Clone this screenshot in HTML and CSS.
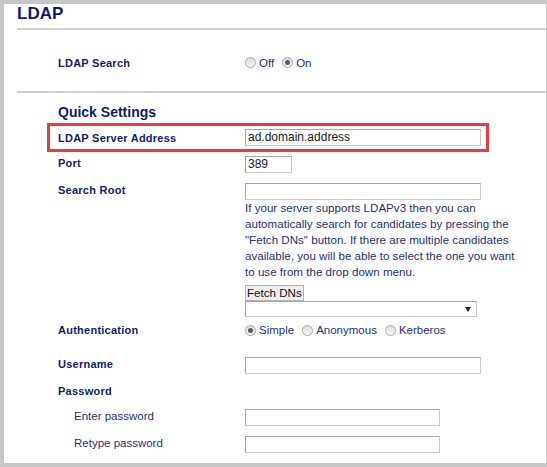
FILE: index.html
```html
<!DOCTYPE html>
<html>
<head>
<meta charset="utf-8">
<link rel="stylesheet" href="styles.css">
</head>
<body>
<div class="panel">
  <h1 class="title">LDAP</h1>
  <div class="rule"></div>
  <div class="search-row">
    <div class="label">LDAP Search</div>
    <div class="radios">
      <span class="radio"></span><span class="rtext">Off</span>
      <span class="radio checked"></span><span class="rtext">On</span>
    </div>
  </div>
  <div class="rule"></div>
  <div class="section">
    <h2 class="heading">Quick Settings</h2>
    <div class="highlight">
      <div class="label">LDAP Server Address</div>
      <div class="input wide">ad.domain.address</div>
    </div>
    <div class="row r-port">
      <div class="label">Port</div>
      <div class="input port">389</div>
    </div>
    <div class="row r-root">
      <div class="label">Search Root</div>
      <div class="control">
        <div class="input wide"></div>
        <p class="help">If your server supports LDAPv3 then you can automatically search for candidates by pressing the "Fetch DNs" button. If there are multiple candidates available, you will be able to select the one you want to use from the drop down menu.</p>
        <div class="button">Fetch DNs</div>
        <div class="select"><span class="arrow"></span></div>
      </div>
    </div>
    <div class="row r-auth">
      <div class="label">Authentication</div>
      <div class="radios">
        <span class="radio checked"></span><span class="rtext">Simple</span>
        <span class="radio"></span><span class="rtext">Anonymous</span>
        <span class="radio"></span><span class="rtext">Kerberos</span>
      </div>
    </div>
    <div class="row r-user">
      <div class="label">Username</div>
      <div class="input wide"></div>
    </div>
    <div class="row r-pass">
      <div class="label">Password</div>
    </div>
    <div class="row r-enter">
      <div class="label sub">Enter password</div>
      <div class="input pw"></div>
    </div>
    <div class="row r-retype">
      <div class="label sub">Retype password</div>
      <div class="input pw"></div>
    </div>
  </div>
</div>
</body>
</html>
```
FILE: styles.css
```css
html, body {
  margin: 0;
  padding: 0;
  background: #c6c6c6;
  font-family: "Liberation Sans", Arial, sans-serif;
}
.panel {
  margin: 4px 0 0 4px;
  width: 542px;
  height: 459px;
  background: #ffffff;
  overflow: hidden;
}
.title {
  margin: 0 0 0 13px;
  height: 24px;
  font-size: 17px;
  line-height: 20px;
  font-weight: bold;
  color: #0d1b6e;
}
.rule {
  margin-left: 13px;
  height: 2px;
  background: #d2d2d2;
}
.search-row {
  display: flex;
  align-items: center;
  height: 57px;
  padding-top: 4px;
  padding-left: 54px;
}
.label {
  width: 187px;
  flex: none;
  font-size: 11px;
  line-height: 14px;
  font-weight: bold;
  letter-spacing: 0.25px;
  color: #101d6b;
}
.label.sub {
  font-weight: normal;
  font-size: 11.5px;
  letter-spacing: 0;
  padding-left: 16px;
  width: 171px;
  color: #1f2f78;
}
.radios {
  display: flex;
  align-items: center;
  font-size: 11.5px;
  color: #1f2f78;
}
.radio {
  width: 9px;
  height: 9px;
  border: 1px solid #a8a8a8;
  border-radius: 50%;
  background: linear-gradient(#dcdcdc, #f6f6f6);
  position: relative;
  margin-right: 3px;
  flex: none;
}
.radio.checked::after {
  content: "";
  position: absolute;
  left: 2px;
  top: 2px;
  width: 5px;
  height: 5px;
  border-radius: 50%;
  background: #5a5a5a;
}
.rtext {
  margin-right: 8px;
}
.section {
  padding-left: 54px;
}
.heading {
  margin: 10px 0 2px;
  font-size: 14px;
  line-height: 18px;
  font-weight: bold;
  color: #0d1b6e;
}
.highlight {
  display: flex;
  align-items: center;
  margin-left: -11px;
  width: 428px;
  height: 23px;
  border: 3px solid #ee3a3f;
  padding-left: 8px;
}
.row {
  display: flex;
  align-items: flex-start;
}
.input {
  box-sizing: border-box;
  height: 17px;
  border: 1px solid;
  border-color: #a6a6a6 #cacaca #cacaca #a6a6a6;
  background: #fff;
  font-size: 12px;
  line-height: 15px;
  padding-left: 2px;
  color: #1a1a1a;
}
.input.wide { width: 236px; }
.input.port { width: 47px; }
.input.pw { width: 195px; }
.r-port { margin-top: 4px; }
.r-root { margin-top: 10px; }
.control {
  display: flex;
  flex-direction: column;
  align-items: flex-start;
}
.help {
  margin: 0;
  width: 276px;
  font-size: 11.6px;
  line-height: 16px;
  color: #1f2f78;
}
.button {
  margin-top: 5px;
  box-sizing: border-box;
  height: 16px;
  border: 1px solid #b4b4b4;
  background: #eeeeee;
  font-size: 11.6px;
  line-height: 14px;
  padding: 0 1px;
  white-space: nowrap;
  color: #111;
}
.select {
  box-sizing: border-box;
  height: 16px;
  width: 232px;
  border: 1px solid;
  border-color: #a6a6a6 #cacaca #cacaca #a6a6a6;
  background: #fff;
  position: relative;
}
.arrow {
  position: absolute;
  right: 5px;
  top: 5px;
  width: 0;
  height: 0;
  border-left: 3px solid transparent;
  border-right: 3px solid transparent;
  border-top: 5px solid #222;
}
.r-auth { margin-top: 6px; }
.r-auth .radios { height: 14px; }
.r-user { margin-top: 20px; }
.r-pass { margin-top: 10px; }
.r-enter { margin-top: 11px; }
.r-retype { margin-top: 10px; }
```
